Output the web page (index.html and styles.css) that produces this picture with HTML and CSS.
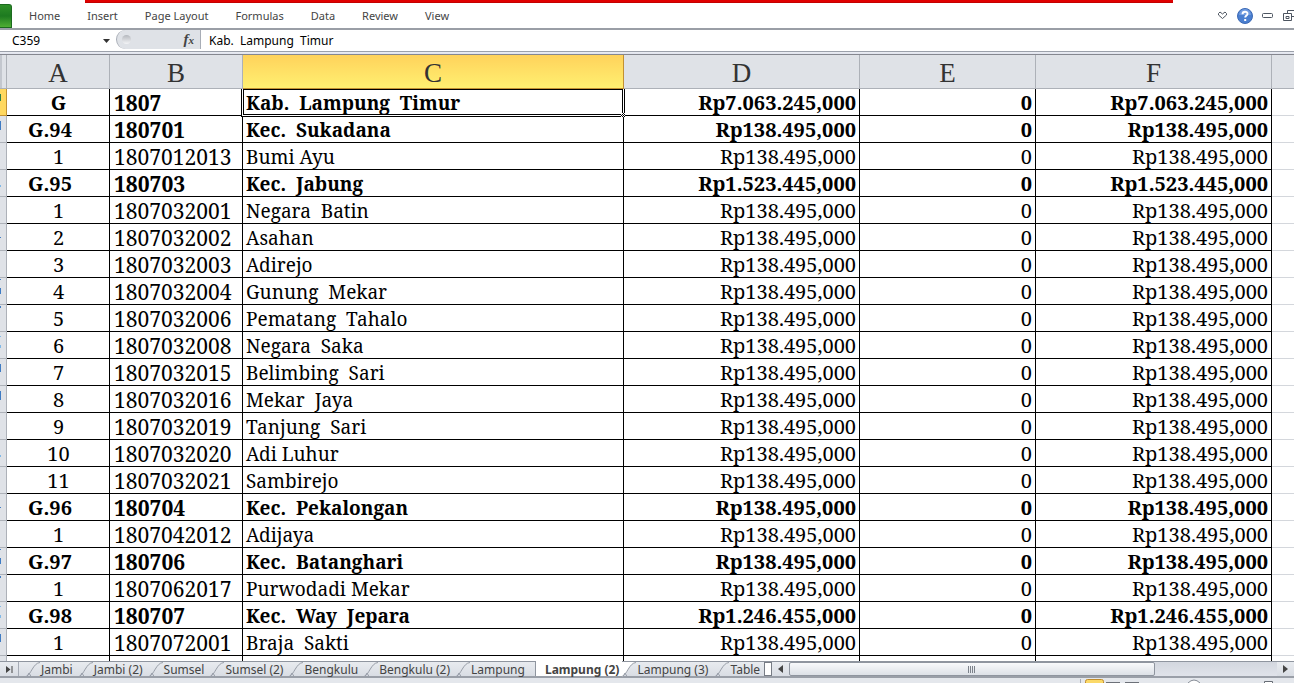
FILE: index.html
```html
<!DOCTYPE html>
<html lang="id">
<head>
<meta charset="utf-8">
<title>Lampung (2)</title>
<link rel="stylesheet" href="styles.css">
</head>
<body>
<header class="ribbon">
  <div class="accent"></div>
  <nav class="menu">
    <button class="file" aria-label="File"></button>
    <button>Home</button><button>Insert</button><button>Page Layout</button><button>Formulas</button><button>Data</button><button>Review</button><button>View</button>
  </nav>
  <div class="tools">
    <button aria-label="Minimize ribbon"><svg width="11" height="9" viewBox="0 0 11 9"><path d="M1.500 2.500 3 1l2.500 2L8 1l1.500 1.500v1.500L5.500 7.500 1.500 4z" fill="#fff" stroke="#4d5560"/></svg></button>
    <button aria-label="Help"><svg width="16" height="16" viewBox="0 0 16 16"><circle cx="8" cy="8" r="7.500" fill="#4a7fd0" stroke="#3c69b4"/><path d="M2 7a6 6 0 0 1 12 0z" fill="#719ce0"/><path d="M5.500 6.200C5.500 2.800 10.700 3 10.500 6c-.1 1.600-2.300 1.700-2.300 3.600" fill="none" stroke="#fff" stroke-width="1.900"/><path d="M7.200 11h2v2h-2z" fill="#fff"/></svg></button>
    <button aria-label="Minimize"><svg width="12" height="6" viewBox="0 0 12 6"><rect x=".5" y=".5" width="10" height="4" rx="1" fill="#fff" stroke="#4d5560"/></svg></button>
    <button aria-label="Restore"><svg width="11" height="12" viewBox="0 0 11 12"><path d="M4.500 3.500v-3H11M11 6.500H8.500" fill="none" stroke="#4d5560"/><path d="M.5 3.500h8v7h-8zM3 6.500h3v2H3z" fill="#fff" stroke="#4d5560"/></svg></button>
  </div>
</header>
<section class="formula">
  <div class="namebox"><input aria-label="Name box" value="C359"><svg width="7" height="4" viewBox="0 0 7 4"><path d="M0 0h7L3.500 4z" fill="#333"/></svg></div>
  <div class="fx"><i class="knob"></i><button aria-label="Insert function">f<small>x</small></button></div>
  <input class="content" aria-label="Formula" value="Kab.  Lampung  Timur">
</section>
<main class="grid">
<table>
<colgroup><col class="w-n"><col class="w-a"><col class="w-b"><col class="w-c"><col class="w-d"><col class="w-e"><col class="w-f"><col></colgroup>
<thead><tr><th class="corner"></th><th>A</th><th>B</th><th class="on">C</th><th>D</th><th>E</th><th>F</th><th></th></tr></thead>
<tbody>
<tr class="b"><th class="on"><svg><path class="g" d="M0 5h1v7H0z"/></svg></th><td>G</td><td>1807</td><td class="active">Kab.  Lampung  Timur<svg class="handle" width="5" height="5" viewBox="0 0 5 5"><path d="M0 0h5v5H0z" fill="#fff"/><path d="M2 0h1v1H2zM2 4h1v1H2zM0 2h1v1H0zM4 2h1v1H4zM2 2h1v1H2zM1 1h1v1H1zM3 1h1v1H3zM1 3h1v1H1zM3 3h1v1H3z"/></svg></td><td>Rp7.063.245,000</td><td>0</td><td>Rp7.063.245,000</td><td></td></tr>
<tr class="b k"><th><svg><path d="M0 5h1v9H0z"/></svg></th><td>G.94</td><td>180701</td><td>Kec.  Sukadana</td><td>Rp138.495,000</td><td>0</td><td>Rp138.495,000</td><td></td></tr>
<tr><th></th><td>1</td><td>1807012013</td><td>Bumi Ayu</td><td>Rp138.495,000</td><td>0</td><td>Rp138.495,000</td><td></td></tr>
<tr class="b k"><th><svg><path class="l" d="M0 15h1v2H0z"/></svg></th><td>G.95</td><td>180703</td><td>Kec.  Jabung</td><td>Rp1.523.445,000</td><td>0</td><td>Rp1.523.445,000</td><td></td></tr>
<tr><th></th><td>1</td><td>1807032001</td><td>Negara  Batin</td><td>Rp138.495,000</td><td>0</td><td>Rp138.495,000</td><td></td></tr>
<tr><th><svg><path d="M0 13h1v1H0z"/></svg></th><td>2</td><td>1807032002</td><td>Asahan</td><td>Rp138.495,000</td><td>0</td><td>Rp138.495,000</td><td></td></tr>
<tr><th></th><td>3</td><td>1807032003</td><td>Adirejo</td><td>Rp138.495,000</td><td>0</td><td>Rp138.495,000</td><td></td></tr>
<tr><th><svg><path d="M0 1h1v1H0zM0 10h1v6H0z"/></svg></th><td>4</td><td>1807032004</td><td>Gunung  Mekar</td><td>Rp138.495,000</td><td>0</td><td>Rp138.495,000</td><td></td></tr>
<tr><th><svg><path d="M0 1h1v2H0z"/></svg></th><td>5</td><td>1807032006</td><td>Pematang  Tahalo</td><td>Rp138.495,000</td><td>0</td><td>Rp138.495,000</td><td></td></tr>
<tr><th><svg><path class="l" d="M0 4h1v1H0zM0 13h1v3H0z"/></svg></th><td>6</td><td>1807032008</td><td>Negara  Saka</td><td>Rp138.495,000</td><td>0</td><td>Rp138.495,000</td><td></td></tr>
<tr><th><svg><path d="M0 5h1v8H0z"/></svg></th><td>7</td><td>1807032015</td><td>Belimbing  Sari</td><td>Rp138.495,000</td><td>0</td><td>Rp138.495,000</td><td></td></tr>
<tr><th><svg><path d="M0 5h1v9H0z"/></svg></th><td>8</td><td>1807032016</td><td>Mekar  Jaya</td><td>Rp138.495,000</td><td>0</td><td>Rp138.495,000</td><td></td></tr>
<tr><th></th><td>9</td><td>1807032019</td><td>Tanjung  Sari</td><td>Rp138.495,000</td><td>0</td><td>Rp138.495,000</td><td></td></tr>
<tr><th><svg><path class="l" d="M0 15h1v2H0z"/></svg></th><td>10</td><td>1807032020</td><td>Adi Luhur</td><td>Rp138.495,000</td><td>0</td><td>Rp138.495,000</td><td></td></tr>
<tr><th></th><td>11</td><td>1807032021</td><td>Sambirejo</td><td>Rp138.495,000</td><td>0</td><td>Rp138.495,000</td><td></td></tr>
<tr class="b k"><th><svg><path d="M0 13h1v1H0z"/></svg></th><td>G.96</td><td>180704</td><td>Kec.  Pekalongan</td><td>Rp138.495,000</td><td>0</td><td>Rp138.495,000</td><td></td></tr>
<tr><th></th><td>1</td><td>1807042012</td><td>Adijaya</td><td>Rp138.495,000</td><td>0</td><td>Rp138.495,000</td><td></td></tr>
<tr class="b k"><th><svg><path d="M0 1h1v1H0zM0 10h1v6H0z"/></svg></th><td>G.97</td><td>180706</td><td>Kec.  Batanghari</td><td>Rp138.495,000</td><td>0</td><td>Rp138.495,000</td><td></td></tr>
<tr><th><svg><path d="M0 1h1v2H0z"/></svg></th><td>1</td><td>1807062017</td><td>Purwodadi Mekar</td><td>Rp138.495,000</td><td>0</td><td>Rp138.495,000</td><td></td></tr>
<tr class="b k"><th><svg><path class="l" d="M0 4h1v1H0zM0 13h1v3H0z"/></svg></th><td>G.98</td><td>180707</td><td>Kec.  Way  Jepara</td><td>Rp1.246.455,000</td><td>0</td><td>Rp1.246.455,000</td><td></td></tr>
<tr><th><svg><path d="M0 5h1v8H0z"/></svg></th><td>1</td><td>1807072001</td><td>Braja  Sakti</td><td>Rp138.495,000</td><td>0</td><td>Rp138.495,000</td><td></td></tr>
<tr><th></th><td></td><td></td><td></td><td></td><td></td><td></td><td></td></tr>
</tbody>
</table>
</main>
<footer>
  <div class="bottom">
    <button class="last" aria-label="Last sheet"><svg width="7" height="7" viewBox="0 0 7 7"><path d="M0 0l4.500 3.500L0 7zM5.500 0h1v7h-1z" fill="#444"/></svg></button>
    <nav class="tabs">
      <button><svg class="slant" viewBox="0 0 14 15"><path d="M0 14.500C5 13 7 1 14 .5" /><path d="M1 14.500h4L3 11z"/></svg>Jambi</button>
      <button><svg class="slant" viewBox="0 0 14 15"><path d="M0 14.500C5 13 7 1 14 .5" /><path d="M1 14.500h4L3 11z"/></svg>Jambi (2)</button>
      <button><svg class="slant" viewBox="0 0 14 15"><path d="M0 14.500C5 13 7 1 14 .5" /><path d="M1 14.500h4L3 11z"/></svg>Sumsel</button>
      <button><svg class="slant" viewBox="0 0 14 15"><path d="M0 14.500C5 13 7 1 14 .5" /><path d="M1 14.500h4L3 11z"/></svg>Sumsel (2)</button>
      <button><svg class="slant" viewBox="0 0 14 15"><path d="M0 14.500C5 13 7 1 14 .5" /><path d="M1 14.500h4L3 11z"/></svg>Bengkulu</button>
      <button><svg class="slant" viewBox="0 0 14 15"><path d="M0 14.500C5 13 7 1 14 .5" /><path d="M1 14.500h4L3 11z"/></svg>Bengkulu (2)</button>
      <button class="before"><svg class="slant" viewBox="0 0 14 15"><path d="M0 14.500C5 13 7 1 14 .5" /><path d="M1 14.500h4L3 11z"/></svg>Lampung</button>
      <button class="current">Lampung (2)</button>
      <button class="after"><svg class="slant" viewBox="0 0 14 15"><path class="fill" d="M0 0h14C7 1 5 13 0 15z"/><path d="M0 14.500C5 13 7 1 14 .5" /><path d="M1 14.500h4L3 11z"/></svg>Lampung (3)</button>
      <button class="cut"><svg class="slant" viewBox="0 0 14 15"><path d="M0 14.500C5 13 7 1 14 .5" /><path d="M1 14.500h4L3 11z"/></svg>Table</button>
    </nav>
    <i class="split"></i>
    <div class="scroll">
      <button aria-label="Scroll left"><svg width="5" height="8" viewBox="0 0 5 8"><path d="M5 0v8L0 4z" fill="#444"/></svg></button>
      <div class="track"><div class="thumb"><svg width="8" height="7" viewBox="0 0 8 7"><path d="M.5 0v7M2.500 0v7M4.500 0v7M6.500 0v7" stroke="#7c828b"/></svg></div></div>
      <button aria-label="Scroll right"><svg width="5" height="8" viewBox="0 0 5 8"><path d="M0 0v8l5-4z" fill="#444"/></svg></button>
    </div>
  </div>
  <div class="status">
    <svg width="214" height="4" viewBox="0 0 214 4"><path d="M.5 0v4" stroke="#a5abb5"/><path d="M5.500 4V2.500q0-2 2-2h14q2 0 2 2V4" fill="#fbd968" stroke="#c08b2c"/><path d="M26 3h14v1H26zM45 3h14v1H45z" fill="#6c7078"/><path d="M108 4q6-6 12 0" fill="#fff" stroke="#868c96"/><path d="M184.500 4V2.500h8V4" fill="#fff" stroke="#666c75"/></svg>
  </div>
</footer>
</body>
</html>
```
FILE: styles.css
```css
* { box-sizing: border-box; }
body {
  margin: 0;
  height: 100vh;
  display: flex;
  flex-direction: column;
  overflow: hidden;
  background: #fff;
  font: 12px/16px "Noto Sans", "Open Sans", sans-serif;
  color: #000;
}
button { border: 0; padding: 0; margin: 0; background: none; font: inherit; color: inherit; }
input { border: 0; padding: 0; margin: 0; min-width: 0; background: none; font: inherit; color: inherit; outline: 0; }
svg { display: block; flex: none; }

.ribbon { position: relative; display: flex; justify-content: space-between; align-items: stretch; height: 28px; flex: none; }
.accent { position: absolute; top: 0; left: 85px; right: 121px; height: 3px; background: #e00000; border-bottom: 1px solid #c40000; }
.menu { display: flex; gap: 27px; padding-top: 4px; font-size: 11px; color: #444; }
.menu .file { width: 12px; margin-right: -10px; background: linear-gradient(#2f8f28, #1d7a20 50%, #4fae33); border: 1px solid #1c6b1f; border-left: 0; border-radius: 0 3px 0 0; }
.tools { display: flex; align-items: center; gap: 9px; padding-top: 3px; }

.formula { display: flex; height: 27px; flex: none; border-top: 2px solid #9a9ea6; border-bottom: 1px solid #85878f; background: linear-gradient(#fff 21px, #9ca1ab 21px, #9ca1ab 22px, #eceef3 22px, #dfe2ee); padding-bottom: 4px; }
.namebox { width: 116px; display: flex; align-items: center; padding: 1px 6px 0 12px; }
.namebox input { flex: 1; width: 20px; }
.fx { width: 85px; height: 19px; display: flex; align-items: center; justify-content: space-between; padding: 0 6px 0 5px; background: #dfe2e7; border: 1px solid #a8adb6; border-width: 0 1px; border-radius: 12px 0 0 12px; }
.knob { width: 9px; height: 9px; border-radius: 50%; background: linear-gradient(#b4b7bd, #f4f5f7); }
.fx button { font: italic bold 15px/18px "Liberation Serif", serif; color: #444; }
.fx small { font-size: 11px; }
.content { flex: 1; padding: 1px 0 0 8px; white-space: pre; }

.grid { flex: 1; min-height: 0; overflow: hidden; }
table { width: 100%; table-layout: fixed; border-collapse: separate; border-spacing: 0; font: 20px/24px "Noto Serif", "DejaVu Serif Condensed", serif; }
.w-n { width: 7px; }
.w-a { width: 103px; }
.w-b { width: 133px; }
.w-c { width: 381px; }
.w-d { width: 236px; }
.w-e { width: 176px; }
.w-f { width: 236px; }
th { padding: 0; border: 1px solid #adb1b8; border-width: 0 1px 1px 0; background: #dfe2e7; font-weight: normal; }
thead th { height: 34px; padding-top: 3px; font: 27px/30px "Liberation Serif", serif; color: #333; }
thead .corner { background: linear-gradient(90deg, #c3c7ce 2px, #dfe2e7 2px); }
thead .on { background: linear-gradient(#ffd25b, #fff071); border-color: #c29132; }
thead th:last-child { border-right: 0; }
tbody th { vertical-align: top; }
tbody .on { background: #ffd85f; border-color: #c29132; }
th svg { width: 1px; height: 26px; fill: #3f7cc4; }
th .g { fill: #2d7f4a; }
th .l { fill: #7fb9e8; }
td { height: 27px; padding: 2px 3px 0 4px; border: 1px solid #000; border-width: 0 1px 1px 0; white-space: pre; text-align: right; }
td:nth-child(2) { text-align: center; }
.k td:nth-child(2) { padding-right: 20px; }
td:nth-child(3) { text-align: left; font-size: 21px; }
td:nth-child(4) { text-align: left; padding-left: 3px; font-size: 19px; }
td:last-child { border-color: #d4d7dc; border-right: 0; }
.b td { font-weight: bold; }
.active { position: relative; }
.active::after { content: ""; position: absolute; inset: 0; border: 1px solid #000; box-shadow: 0 0 0 1px #fff, 0 0 0 2px #000; clip-path: inset(0 -2px -2px -2px); }
.handle { position: absolute; right: -3px; bottom: -3px; z-index: 1; }

footer { flex: none; }
.bottom { display: flex; height: 17px; background: linear-gradient(#e8ebef, #d9dde4); border-top: 1px solid #8f959f; border-bottom: 2px solid #9a9fa8; color: #444; }
.last { width: 19px; display: flex; align-items: center; padding-left: 6px; border-right: 1px solid #a5abb5; }
.tabs { display: flex; width: 745px; padding-left: 7px; line-height: 16px; }
.tabs button { display: flex; flex: none; gap: 1px; padding-right: 6px; }
.slant { width: 14px; height: 15px; fill: none; stroke: #989ea8; }
.slant .fill { fill: #fff; stroke: none; }
.tabs .before { border-right: 1px solid #8f959f; padding-right: 10px; }
.tabs .current { background: #fff; font-weight: bold; padding: 1px 3px 0 9px; margin-top: -1px; }
.tabs .after { padding-right: 7px; }
.split { width: 8px; border: 1px solid #777c85; background: #fff; }
.scroll { flex: 1; display: flex; }
.scroll button { width: 17px; display: flex; align-items: center; justify-content: center; }
.track { flex: 1; background: linear-gradient(#d3d7df, #e0e3ea); }
.thumb { width: 75%; height: 14px; display: flex; align-items: center; justify-content: center; border: 1px solid #8f959f; border-radius: 2px; background: linear-gradient(#f8f9fb, #dde1e7); }
.status { display: flex; justify-content: flex-end; height: 5px; padding-top: 1px; background: #e4e7ec; }
```
